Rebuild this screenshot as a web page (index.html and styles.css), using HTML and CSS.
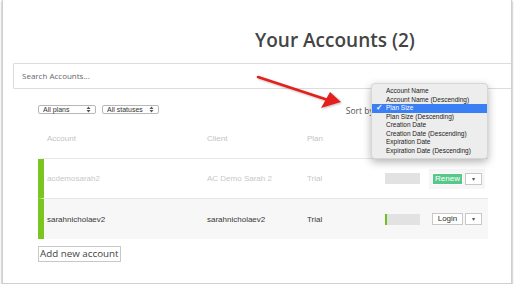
FILE: index.html
```html
<!DOCTYPE html>
<html lang="en">
<head>
    <meta charset="UTF-8">
    <title>Your Accounts</title>
    <link rel="stylesheet" href="styles.css">
</head>
<body>
    <div class="window">
        <h1 class="title">Your Accounts (2)</h1>
        <div class="search">Search Accounts...</div>

        <div class="content">
            <div class="filters">
                <span class="select sel-plans">All plans <svg width="5" height="7" viewBox="0 0 5 7"><path d="M0.5 3 L2.5 0.5 L4.5 3 Z M0.5 4 L2.5 6.5 L4.5 4 Z" fill="#555"/></svg></span>
                <span class="select">All statuses <svg width="5" height="7" viewBox="0 0 5 7"><path d="M0.5 3 L2.5 0.5 L4.5 3 Z M0.5 4 L2.5 6.5 L4.5 4 Z" fill="#555"/></svg></span>
                <span class="sort-by">Sort by</span>
            </div>

            <div class="row head">
                <span>Account</span>
                <span>Client</span>
                <span>Plan</span>
            </div>

            <div class="row expired">
                <span>acdemosarah2</span>
                <span>AC Demo Sarah 2</span>
                <span>Trial</span>
                <span class="progress"></span>
                <span class="actions boxed">
                    <span class="btn renew">Renew</span>
                    <span class="btn caret">&#9662;</span>
                </span>
            </div>

            <div class="row active">
                <span>sarahnicholaev2</span>
                <span>sarahnicholaev2</span>
                <span>Trial</span>
                <span class="progress"><span class="fill"></span></span>
                <span class="actions">
                    <span class="btn login">Login</span>
                    <span class="btn caret">&#9662;</span>
                </span>
            </div>

            <span class="add-btn">Add new account</span>
        </div>

        <ul class="sort-menu">
            <li>Account Name</li>
            <li>Account Name (Descending)</li>
            <li class="selected">Plan Size</li>
            <li>Plan Size (Descending)</li>
            <li>Creation Date</li>
            <li>Creation Date (Descending)</li>
            <li>Expiration Date</li>
            <li>Expiration Date (Descending)</li>
        </ul>

        <svg class="arrow" width="110" height="45" viewBox="0 0 110 45">
            <line x1="2" y1="4" x2="72" y2="27" stroke="#e3201b" stroke-width="2.6" stroke-linecap="round"/>
            <polygon points="65,35 74,19 85,29" fill="#e3201b"/>
        </svg>
    </div>
</body>
</html>
```

FILE: styles.css
```css
body {
    margin: 0;
    background: #fff;
    font-family: "Liberation Sans", Arial, sans-serif;
}

.window {
    position: relative;
    box-sizing: border-box;
    width: 510px;
    height: 284px;
    margin-left: 2px;
    border: 1px solid #d0d0d0;
    border-top: none;
    box-shadow: 0 1px 2px rgba(0, 0, 0, 0.45);
    overflow: hidden;
    background: #fff;
}

.title {
    margin: 0;
    padding: 27px 0 0 252px;
    font-family: "Open Sans", sans-serif;
    font-weight: 600;
    font-size: 19px;
    line-height: 27px;
    color: #444;
}

.search {
    box-sizing: border-box;
    height: 26px;
    margin: 9px 0 0 10px;
    padding: 0 0 0 8px;
    border: 1px solid #dcdcdc;
    border-right: none;
    border-radius: 2px 0 0 2px;
    font-family: "Open Sans", sans-serif;
    font-size: 8px;
    line-height: 24px;
    color: #666;
}

.content {
    padding-left: 35px;
    width: 450px;
}

.filters {
    display: flex;
    align-items: center;
    gap: 6px;
    margin-top: 14px;
    height: 12px;
}

.select {
    display: flex;
    align-items: center;
    justify-content: space-between;
    box-sizing: border-box;
    height: 9px;
    padding: 0 4px 0 4px;
    border: 1px solid #b8b8b8;
    border-radius: 2px;
    font-size: 7px;
    color: #333;
    gap: 6px;
}

.sel-plans {
    width: 58px;
}

.sort-by {
    margin-left: 181px;
    margin-top: 2px;
    font-family: "Open Sans", sans-serif;
    font-size: 8.5px;
    color: #555;
}

.row {
    display: grid;
    grid-template-columns: 160px 100px 78px 47px 1fr;
    align-items: center;
    box-sizing: border-box;
    height: 40px;
    padding-left: 3px;
    border-left: 6px solid #7ac51f;
    border-bottom: 1px solid #e8e8e8;
    font-size: 8px;
}

.row.head {
    margin-top: 4px;
    border-left-color: transparent;
    color: #c4c4c4;
}

.row.expired {
    color: #c8c8c8;
}

.row.active {
    background: #f7f7f7;
    color: #3a3a3a;
    border-bottom: none;
}

.progress {
    display: block;
    width: 35px;
    height: 11px;
    background: #e2e2e2;
}

.progress .fill {
    display: block;
    width: 2px;
    height: 100%;
    background: #6ec21a;
}

.actions {
    display: flex;
    align-items: center;
    gap: 2px;
}

.actions.boxed {
    margin-left: -3px;
    padding: 4px 3px;
    width: 50px;
    background: #f6f6f6;
}

.btn {
    display: inline-block;
    box-sizing: border-box;
    height: 12px;
    line-height: 10px;
    border: 1px solid #c8c8c8;
    background: #fff;
    font-size: 8px;
    text-align: center;
}

.renew {
    width: 31px;
    background: #55c88a;
    border-color: #fff;
    color: #fff;
}

.login {
    width: 31px;
    color: #333;
}

.caret {
    width: 17px;
    font-size: 6px;
    color: #555;
}

.add-btn {
    display: inline-block;
    margin-top: 7px;
    padding: 0 1px;
    border: 1px solid #c8c8c8;
    font-family: "Open Sans", sans-serif;
    font-size: 9.8px;
    line-height: 14px;
    color: #444;
}

.sort-menu {
    position: absolute;
    left: 368px;
    top: 83px;
    width: 115px;
    margin: 0;
    padding: 3px 0;
    list-style: none;
    background: #ededed;
    border: 1px solid #d6d6d6;
    border-radius: 4px;
    box-shadow: 0 3px 8px rgba(0, 0, 0, 0.3);
}

.sort-menu li {
    position: relative;
    height: 8.5px;
    padding-left: 14px;
    font-size: 6.5px;
    line-height: 8.5px;
    color: #222;
    white-space: nowrap;
}

.sort-menu li.selected {
    background: #3b7ff5;
    color: #fff;
}

.sort-menu li.selected::before {
    content: "\2713";
    position: absolute;
    left: 4px;
    font-size: 8px;
    font-weight: bold;
}

.arrow {
    position: absolute;
    left: 253px;
    top: 73px;
    filter: drop-shadow(1px 1px 1px rgba(0, 0, 0, 0.25));
}
```
